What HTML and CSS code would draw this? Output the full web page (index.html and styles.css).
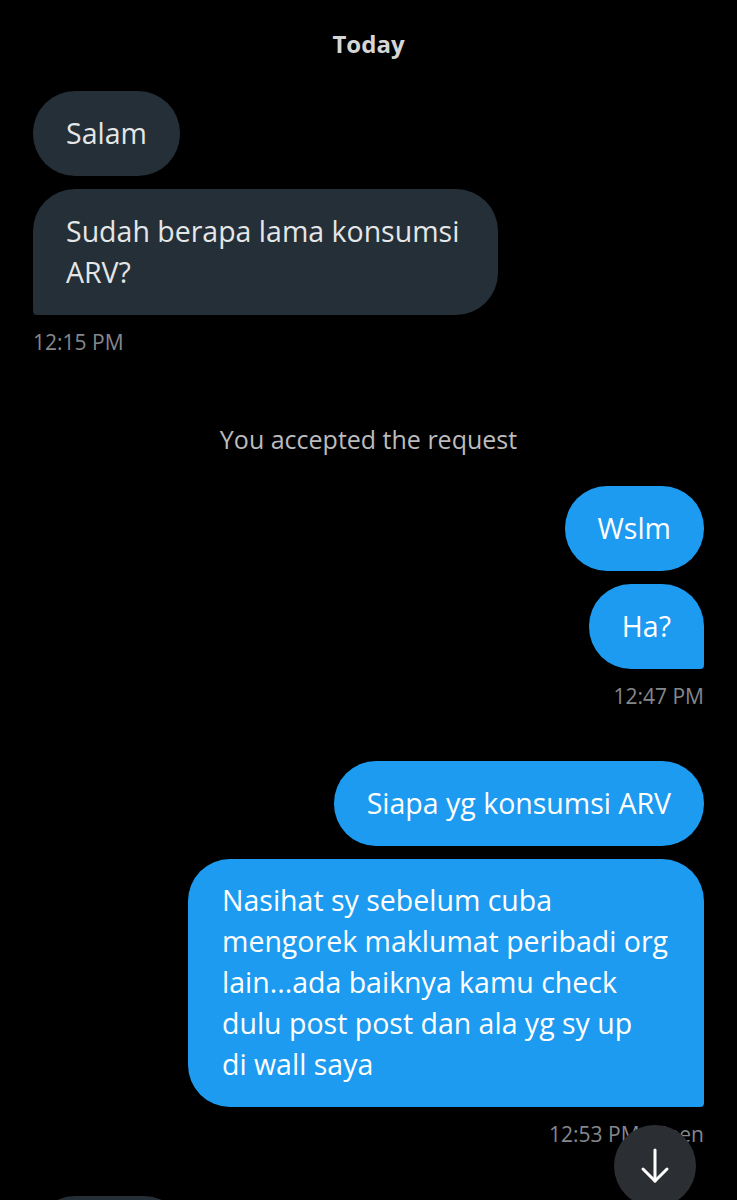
FILE: index.html
```html
<!DOCTYPE html>
<html lang="en">
<head>
    <meta charset="UTF-8">
    <meta name="viewport" content="width=device-width, initial-scale=1.0">
    <title>Messages</title>
    <link rel="stylesheet" href="styles.css">
</head>
<body>

    <div class="chat">
        <div class="day">Today</div>

        <div class="group in">
            <div class="bubble">Salam</div>
            <div class="bubble tail narrow">Sudah berapa lama konsumsi ARV?</div>
            <div class="time">12:15 PM</div>
        </div>

        <div class="notice">You accepted the request</div>

        <div class="group out">
            <div class="bubble">Wslm</div>
            <div class="bubble tail">Ha?</div>
            <div class="time">12:47 PM</div>
        </div>

        <div class="group out gap">
            <div class="bubble">Siapa yg konsumsi ARV</div>
            <div class="bubble tail wide">Nasihat sy sebelum cuba mengorek maklumat peribadi org lain...ada baiknya kamu check dulu post post dan ala yg sy up<br>di wall saya</div>
            <div class="time">12:53 PM · Seen</div>
        </div>

        <div class="group in next">
            <div class="bubble stub"></div>
        </div>
    </div>

    <button class="scroll-down" aria-label="Scroll to bottom">
        <svg width="30" height="36" viewBox="0 0 30 36" fill="none" stroke="#fff" stroke-width="3" stroke-linecap="round" stroke-linejoin="round">
            <path d="M15 2 V33"/>
            <path d="M3 21 L15 33 L27 21"/>
        </svg>
    </button>

</body>
</html>
```

FILE: styles.css
```css
body {
    margin: 0;
    background-color: #000;
    font-family: "Open Sans", Arial, sans-serif;
    color: #e7e9ea;
    height: 1200px;
    overflow: hidden;
    position: relative;
}
.chat {
    padding: 29px 33px 0;
    display: flex;
    flex-direction: column;
}
.day {
    text-align: center;
    font-size: 24px;
    line-height: 30px;
    font-weight: 700;
    color: #d6d6d6;
}
.group {
    display: flex;
    flex-direction: column;
    gap: 13px;
    margin-top: 32px;
}
.group.in {
    align-items: flex-start;
}
.group.out {
    align-items: flex-end;
}
.group.gap {
    margin-top: 52px;
}
.group.next {
    margin-top: 49px;
}
.bubble {
    font-size: 28.5px;
    line-height: 41px;
    padding: 22px 33px;
    border-radius: 42px;
    box-sizing: border-box;
}
.in .bubble {
    background-color: #252f37;
    color: #e4e6e7;
}
.out .bubble {
    background-color: #1d9bf0;
    color: #fff;
}
.in .bubble.tail {
    border-bottom-left-radius: 4px;
}
.out .bubble.tail {
    border-bottom-right-radius: 4px;
}
.bubble.narrow {
    max-width: 465px;
}
.bubble.wide {
    max-width: 516px;
    padding: 21px 33px 22px 34px;
}
.bubble.stub {
    width: 153px;
    height: 85px;
}
.time {
    font-size: 21px;
    line-height: 26px;
    color: #84888c;
    margin-top: 1px;
}
.notice {
    text-align: center;
    font-size: 25px;
    line-height: 30px;
    color: #bcbcbc;
    margin-top: 69px;
}
.scroll-down {
    position: absolute;
    left: 614px;
    top: 1125px;
    width: 82px;
    height: 82px;
    border-radius: 50%;
    border: none;
    background-color: #2b2f33;
    display: flex;
    justify-content: center;
    align-items: flex-start;
    padding-top: 23px;
    box-sizing: border-box;
}
```
